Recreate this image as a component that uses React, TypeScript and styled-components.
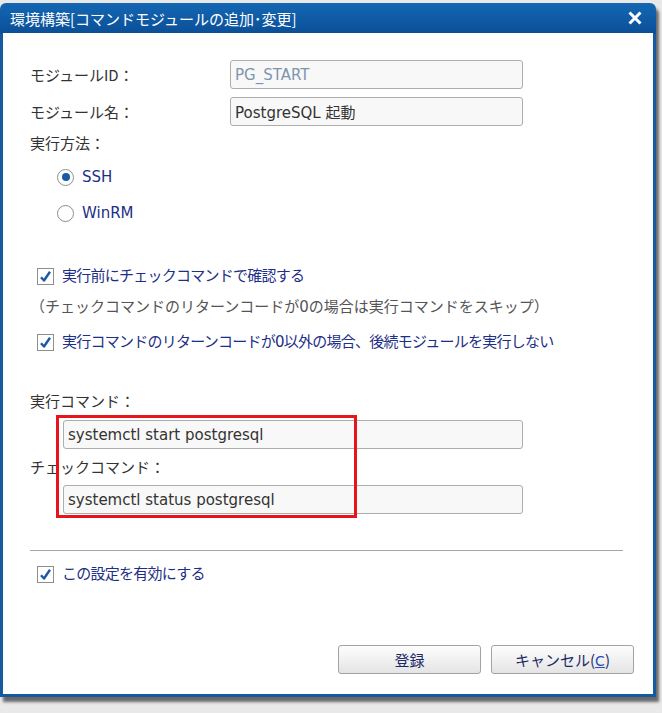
import React from 'react';
import styled, { createGlobalStyle } from 'styled-components';

const GlobalStyle = createGlobalStyle`
  html, body {
    margin: 0;
    padding: 0;
    background: #e9e9e9;
  }
  body {
    font-family: 'DejaVu Sans', 'Noto Sans CJK JP', sans-serif;
    font-size: 15px;
    color: #333;
  }
`;

const Page = styled.div`
  width: 662px;
  height: 713px;
  padding-top: 3px;
  box-sizing: border-box;
  overflow: hidden;
`;

const Dialog = styled.div`
  width: 656px;
  height: 694px;
  box-sizing: border-box;
  background: linear-gradient(#1467b4, #0b4f98 30px, #155a9f 31px);
  border-radius: 6px 6px 0 0;
  padding: 0 3px 3px 3px;
  display: flex;
  flex-direction: column;
  box-shadow: 3px 5px 3px rgba(0, 0, 0, 0.55);
`;

const TitleBar = styled.div`
  height: 30px;
  display: flex;
  align-items: center;
  justify-content: space-between;
  padding: 0 10px 0 7px;
  color: #fff;
  font-family: 'Noto Sans CJK JP', sans-serif;
  font-size: 15px;
`;

const CloseButton = styled.span`
  display: flex;
  align-items: center;
  justify-content: center;
  width: 16px;
  height: 16px;
`;

const Body = styled.div`
  flex: 1;
  background: #fff;
  padding: 27px 0 0 27px;
  display: flex;
  flex-direction: column;
`;

const Row = styled.div<{ $mt?: number; $ml?: number }>`
  display: flex;
  align-items: center;
  margin-top: ${(p) => p.$mt ?? 0}px;
  margin-left: ${(p) => p.$ml ?? 0}px;
`;

const Label = styled.div<{ $width?: number }>`
  width: ${(p) => (p.$width ? `${p.$width}px` : 'auto')};
  height: 20px;
  line-height: 20px;
  font-family: 'Noto Sans CJK JP', sans-serif;
  font-size: 15px;
  color: #333;
  white-space: nowrap;
`;

const TextBox = styled.div<{ $width: number; $disabled?: boolean }>`
  width: ${(p) => p.$width}px;
  height: 29px;
  box-sizing: border-box;
  border: 1px solid #adadad;
  border-radius: 3px;
  background: #f8f8f8;
  padding: 0 4px;
  display: flex;
  align-items: center;
  font-size: 15px;
  color: ${(p) => (p.$disabled ? '#7e95ad' : '#333')};
  white-space: nowrap;
`;

const OptionText = styled.span<{ $tight?: boolean }>`
  color: #1d2f86;
  font-size: 15px;
  white-space: nowrap;
  line-height: 20px;
  letter-spacing: ${(p) => (p.$tight ? '-0.75px' : '0')};
`;

const Radio = styled.span<{ $checked?: boolean }>`
  width: 17px;
  height: 17px;
  box-sizing: border-box;
  border-radius: 50%;
  border: 1px solid #8e8e8e;
  background: #fff;
  margin-right: 8px;
  display: flex;
  align-items: center;
  justify-content: center;
  &::after {
    content: '';
    display: ${(p) => (p.$checked ? 'block' : 'none')};
    width: 8px;
    height: 8px;
    border-radius: 50%;
    background: #1a5aa3;
  }
`;

const RadioRow = styled(Row)`
  height: 36px;
`;

const CheckBox = styled.span`
  width: 17px;
  height: 17px;
  box-sizing: border-box;
  border: 1px solid #8e8e8e;
  background: #fff;
  margin-right: 8px;
  display: flex;
  align-items: center;
  justify-content: center;
  flex-shrink: 0;
`;

const Note = styled.div<{ $mt: number }>`
  margin-top: ${(p) => p.$mt}px;
  margin-left: 0;
  height: 20px;
  line-height: 20px;
  color: #555;
  font-size: 15px;
  white-space: nowrap;
`;

const Commands = styled.div`
  position: relative;
  margin-top: 39px;
  display: flex;
  flex-direction: column;
`;

const Highlight = styled.div`
  position: absolute;
  left: 26px;
  top: 24px;
  width: 301px;
  height: 103px;
  box-sizing: border-box;
  border: 3px solid #e8141c;
  pointer-events: none;
`;

const Divider = styled.hr`
  margin: 36px 0 0 0;
  width: 593px;
  border: none;
  height: 1px;
  background: #a6a6a6;
`;

const Footer = styled.div`
  margin-top: 61px;
  display: flex;
  justify-content: flex-end;
  gap: 10px;
  padding-right: 19px;
`;

const Button = styled.button`
  width: 143px;
  height: 29px;
  box-sizing: border-box;
  border: 1px solid #a3a3a3;
  border-radius: 3px;
  background: linear-gradient(#fdfdfd, #f1f1f1 50%, #e4e4e4);
  font-family: 'Noto Sans CJK JP', sans-serif;
  font-size: 15px;
  color: #1d2a66;
  padding: 0;
  cursor: pointer;
`;

const AccessKey = styled.span`
  color: #2a4bb5;
  text-decoration: underline;
  font-family: 'DejaVu Sans', sans-serif;
  font-size: 14px;
`;

const CheckMark = () => (
  <svg width="13" height="13" viewBox="0 0 13 13">
    <path d="M2 7.2 L5 10.5 L11 1.8" fill="none" stroke="#1a5aa3" strokeWidth="2.4" strokeLinejoin="round" />
  </svg>
);

const Check: React.FC<{ text: string; mt: number }> = ({ text, mt }) => (
  <Row $mt={mt} $ml={7}>
    <CheckBox>
      <CheckMark />
    </CheckBox>
    <OptionText $tight>{text}</OptionText>
  </Row>
);

const App: React.FC = () => (
  <Page>
    <GlobalStyle />
    <Dialog>
      <TitleBar>
        <span>環境構築[コマンドモジュールの追加･変更]</span>
        <CloseButton>
          <svg width="14" height="14" viewBox="0 0 14 14">
            <path d="M1.5 1.5 L12.5 12.5 M12.5 1.5 L1.5 12.5" stroke="#fff" strokeWidth="3" />
          </svg>
        </CloseButton>
      </TitleBar>
      <Body>
        <Row>
          <Label $width={200}>モジュールID：</Label>
          <TextBox $width={293} $disabled>PG_START</TextBox>
        </Row>
        <Row $mt={8}>
          <Label $width={200}>モジュール名：</Label>
          <TextBox $width={293}>PostgreSQL 起動</TextBox>
        </Row>
        <Row $mt={7}>
          <Label>実行方法：</Label>
        </Row>
        <RadioRow $mt={6} $ml={27}>
          <Radio $checked />
          <OptionText>SSH</OptionText>
        </RadioRow>
        <RadioRow $ml={27}>
          <Radio />
          <OptionText>WinRM</OptionText>
        </RadioRow>
        <Check mt={35} text="実行前にチェックコマンドで確認する" />
        <Note $mt={11}>（チェックコマンドのリターンコードが0の場合は実行コマンドをスキップ）</Note>
        <Check mt={15} text="実行コマンドのリターンコードが0以外の場合、後続モジュールを実行しない" />
        <Commands>
          <Label>実行コマンド：</Label>
          <Row $mt={9} $ml={33}>
            <TextBox $width={460}>systemctl start postgresql</TextBox>
          </Row>
          <Row $mt={8}>
            <Label>チェックコマンド：</Label>
          </Row>
          <Row $mt={8} $ml={33}>
            <TextBox $width={460}>systemctl status postgresql</TextBox>
          </Row>
          <Highlight />
        </Commands>
        <Divider />
        <Check mt={13} text="この設定を有効にする" />
        <Footer>
          <Button>登録</Button>
          <Button>
            キャンセル(<AccessKey>C</AccessKey>)
          </Button>
        </Footer>
      </Body>
    </Dialog>
  </Page>
);

export default App;
